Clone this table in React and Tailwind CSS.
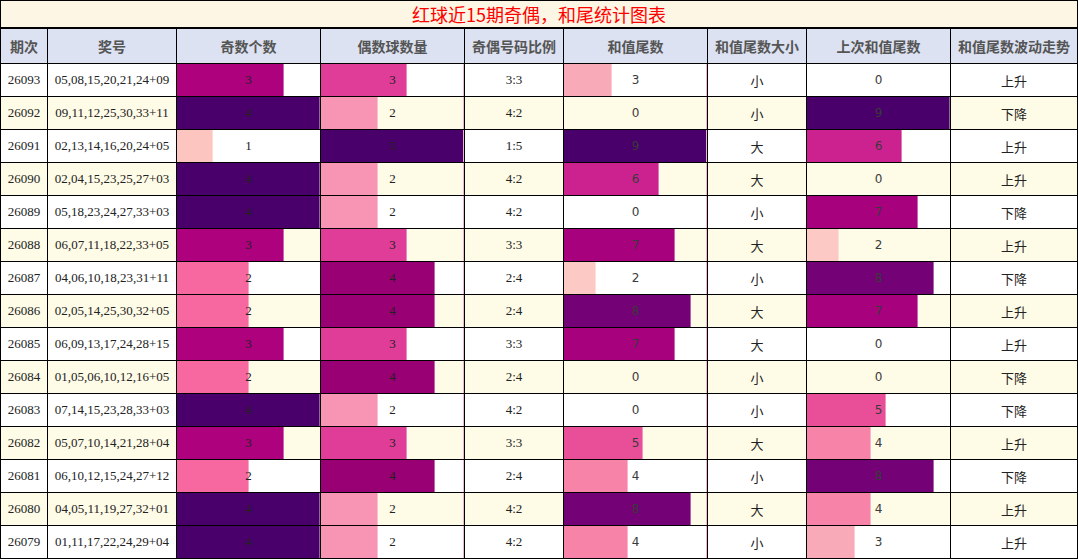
import React from "react";

const rows = [
  ["26093", "05,08,15,20,21,24+09", 3, 3, "3:3", 3, "小", 0, "上升"],
  ["26092", "09,11,12,25,30,33+11", 4, 2, "4:2", 0, "小", 9, "下降"],
  ["26091", "02,13,14,16,20,24+05", 1, 5, "1:5", 9, "大", 6, "上升"],
  ["26090", "02,04,15,23,25,27+03", 4, 2, "4:2", 6, "大", 0, "上升"],
  ["26089", "05,18,23,24,27,33+03", 4, 2, "4:2", 0, "小", 7, "下降"],
  ["26088", "06,07,11,18,22,33+05", 3, 3, "3:3", 7, "大", 2, "上升"],
  ["26087", "04,06,10,18,23,31+11", 2, 4, "2:4", 2, "小", 8, "下降"],
  ["26086", "02,05,14,25,30,32+05", 2, 4, "2:4", 8, "大", 7, "上升"],
  ["26085", "06,09,13,17,24,28+15", 3, 3, "3:3", 7, "大", 0, "上升"],
  ["26084", "01,05,06,10,12,16+05", 2, 4, "2:4", 0, "小", 0, "下降"],
  ["26083", "07,14,15,23,28,33+03", 4, 2, "4:2", 0, "小", 5, "下降"],
  ["26082", "05,07,10,14,21,28+04", 3, 3, "3:3", 5, "大", 4, "上升"],
  ["26081", "06,10,12,15,24,27+12", 2, 4, "2:4", 4, "小", 8, "下降"],
  ["26080", "04,05,11,19,27,32+01", 4, 2, "4:2", 8, "大", 4, "上升"],
  ["26079", "01,11,17,22,24,29+04", 4, 2, "4:2", 4, "小", 3, "上升"],
];

const oddColors = { 1: "#fcc5c0", 2: "#f768a1", 3: "#ae017e", 4: "#49006a" };
const evenColors = { 2: "#f995b4", 3: "#df3d98", 4: "#990074", 5: "#49006a" };
const tailColors = {
  1: "#fde0dd",
  2: "#fcc9c5",
  3: "#f9aab9",
  4: "#f783a9",
  5: "#e84f98",
  6: "#cc2290",
  7: "#a8017e",
  8: "#750176",
  9: "#49006a",
};

const headers = [
  "期次",
  "奖号",
  "奇数个数",
  "偶数球数量",
  "奇偶号码比例",
  "和值尾数",
  "和值尾数大小",
  "上次和值尾数",
  "和值尾数波动走势",
];

const serif = "font-['Liberation_Serif','Noto_Sans_CJK_SC',serif]";
const sans = "font-['Noto_Sans_CJK_SC','DejaVu_Sans',sans-serif]";

function BarCell({ value, max, colors, bg, sansNum, edge }) {
  const pct = (value / max) * 100;
  return (
    <div className={`relative flex items-center justify-center ${bg}`}>
      {value > 0 && (
        <div
          className="absolute left-0 top-0 bottom-0 border-r border-white/40"
          style={{ width: `${pct}%`, backgroundColor: colors[value] }}
        />
      )}
      {edge && <div className="absolute right-0 top-0 bottom-0 w-px bg-[#f4b3cf]" />}
      <span
        className={
          sansNum
            ? "relative text-[12px] text-[#3a3a3a] font-['DejaVu_Sans',sans-serif]"
            : `relative text-[13px] text-[#222] ${serif}`
        }
      >
        {value}
      </span>
    </div>
  );
}

export default function App() {
  return (
    <div className="w-[1078px] h-[559px] bg-black p-px flex flex-col">
      <div
        className={`h-[26px] mb-[2px] bg-[#fdf6e4] flex items-center justify-center text-[18px] text-[#ff0000] ${sans}`}
      >
        红球近15期奇偶，和尾统计图表
      </div>
      <div className="grid grid-cols-[46px_128px_143px_143px_98px_143px_98px_143px_126px] grid-rows-[34px_repeat(15,32px)] gap-px">
        {headers.map((h) => (
          <div
            key={h}
            className={`bg-[#dce2f2] flex items-center justify-center text-[14px] font-bold text-[#555] ${sans}`}
          >
            {h}
          </div>
        ))}
        {rows.map((r, i) => {
          const bg = i % 2 === 0 ? "bg-white" : "bg-[#fefbe7]";
          return (
            <React.Fragment key={r[0]}>
              <div className={`${bg} flex items-center justify-center text-[13px] text-[#222] ${serif}`}>
                {r[0]}
              </div>
              <div className={`${bg} flex items-center justify-center text-[13px] text-[#222] ${serif}`}>
                {r[1]}
              </div>
              <BarCell value={r[2]} max={4} colors={oddColors} bg={bg} />
              <BarCell value={r[3]} max={5} colors={evenColors} bg={bg} edge />
              <div className={`${bg} flex items-center justify-center text-[13px] text-[#222] ${serif}`}>
                {r[4]}
              </div>
              <BarCell value={r[5]} max={9} colors={tailColors} bg={bg} sansNum edge />
              <div className={`${bg} flex items-center justify-center pt-px text-[13px] text-[#222] ${sans}`}>
                {r[6]}
              </div>
              <BarCell value={r[7]} max={9} colors={tailColors} bg={bg} sansNum />
              <div className={`${bg} flex items-center justify-center pt-px text-[13px] text-[#222] ${sans}`}>
                {r[8]}
              </div>
            </React.Fragment>
          );
        })}
      </div>
    </div>
  );
}
